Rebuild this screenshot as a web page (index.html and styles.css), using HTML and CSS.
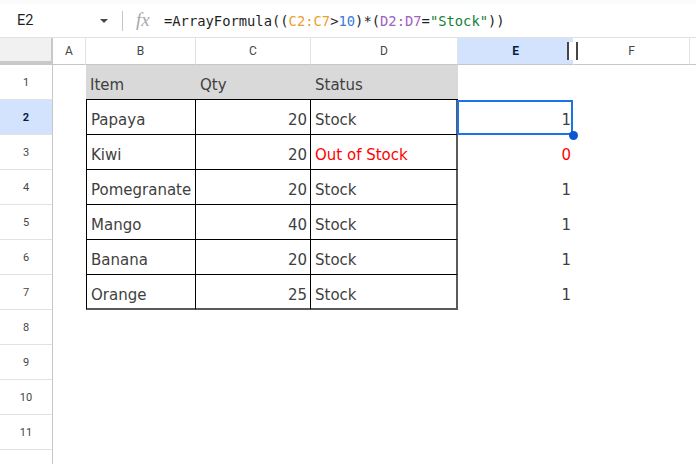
FILE: index.html
```html
<!DOCTYPE html>
<html>
<head>
<meta charset="utf-8">
<link rel="stylesheet" href="styles.css">
</head>
<body>
<div class="app">
  <div class="topstrip"></div>
  <div class="fbar">
    <div class="namebox">
      <span class="ref">E2</span>
      <svg class="caret" width="8" height="4" viewBox="0 0 8 4"><path d="M0 0H8L4 4Z" fill="#444746"/></svg>
    </div>
    <div class="fsep"></div>
    <span class="fx">fx</span>
    <div class="formula">=ArrayFormula((<span class="f-or">C2:C7</span>&gt;<span class="f-num">10</span>)*(<span class="f-pu">D2:D7</span>=<span class="f-str">"Stock"</span>))</div>
  </div>
  <div class="sheet">
    <div class="corner"></div>
    <div class="ch">A</div>
    <div class="ch">B</div>
    <div class="ch">C</div>
    <div class="ch">D</div>
    <div class="ch ch-sel">E<span class="grip"></span></div>
    <div class="ch">F</div>
    <div class="ch ch-last"></div>

    <div class="rh">1</div><div class="c"></div>
    <div class="c hd">Item</div><div class="c hd">Qty</div><div class="c hd">Status</div>
    <div class="c"></div><div class="c"></div><div class="c"></div>

    <div class="rh rh-sel">2</div><div class="c"></div>
    <div class="c t tl">Papaya</div><div class="c t num">20</div><div class="c t tr">Stock</div>
    <div class="c num sel">1</div><div class="c"></div><div class="c"></div>

    <div class="rh">3</div><div class="c"></div>
    <div class="c t tl">Kiwi</div><div class="c t num">20</div><div class="c t tr red">Out of Stock</div>
    <div class="c num red">0</div><div class="c"></div><div class="c"></div>

    <div class="rh">4</div><div class="c"></div>
    <div class="c t tl">Pomegranate</div><div class="c t num">20</div><div class="c t tr">Stock</div>
    <div class="c num">1</div><div class="c"></div><div class="c"></div>

    <div class="rh">5</div><div class="c"></div>
    <div class="c t tl">Mango</div><div class="c t num">40</div><div class="c t tr">Stock</div>
    <div class="c num">1</div><div class="c"></div><div class="c"></div>

    <div class="rh">6</div><div class="c"></div>
    <div class="c t tl">Banana</div><div class="c t num">20</div><div class="c t tr">Stock</div>
    <div class="c num">1</div><div class="c"></div><div class="c"></div>

    <div class="rh">7</div><div class="c"></div>
    <div class="c t tl tb">Orange</div><div class="c t num tb">25</div><div class="c t tr tb">Stock</div>
    <div class="c num">1</div><div class="c"></div><div class="c"></div>

    <div class="rh">8</div><div class="c"></div><div class="c"></div><div class="c"></div><div class="c"></div><div class="c"></div><div class="c"></div><div class="c"></div>
    <div class="rh">9</div><div class="c"></div><div class="c"></div><div class="c"></div><div class="c"></div><div class="c"></div><div class="c"></div><div class="c"></div>
    <div class="rh">10</div><div class="c"></div><div class="c"></div><div class="c"></div><div class="c"></div><div class="c"></div><div class="c"></div><div class="c"></div>
    <div class="rh">11</div><div class="c"></div><div class="c"></div><div class="c"></div><div class="c"></div><div class="c"></div><div class="c"></div><div class="c"></div>
    <div class="rh"></div><div class="c"></div><div class="c"></div><div class="c"></div><div class="c"></div><div class="c"></div><div class="c"></div><div class="c"></div>
  </div>
</div>
</body>
</html>
```

FILE: styles.css
```css
* { box-sizing: border-box; }
html, body { margin: 0; padding: 0; background: #fff; }
body { width: 696px; height: 464px; overflow: hidden; font-family: Roboto, "Liberation Sans", sans-serif; }

.app { display: flex; flex-direction: column; }

.topstrip { height: 4px; background: #f9fbfd; }

.fbar {
  height: 34px;
  display: flex;
  align-items: center;
  border-bottom: 1px solid #e1e3e1;
  background: #fff;
}
.namebox {
  width: 122px;
  display: flex;
  align-items: center;
  padding-left: 17px;
  padding-right: 14px;
  justify-content: space-between;
}
.ref { font-size: 14.5px; color: #1f1f1f; }
.caret { display: block; margin-top: 1px; }
.fsep { width: 1px; height: 20px; background: #c4c7c5; }
.fx {
  font-family: "Liberation Serif", serif;
  font-style: italic;
  font-size: 19px;
  color: #a5a8ab;
  margin-left: 13px;
  width: 28px;
  margin-top: -2px;
}
.formula {
  font-family: "DejaVu Sans Mono", "Liberation Mono", monospace;
  font-size: 13.8px;
  color: #1f1f1f;
  white-space: nowrap;
  margin-top: 1px;
}
.f-or { color: #f09d2b; }
.f-num { color: #3b7be0; }
.f-pu { color: #a15fc2; }
.f-str { color: #188038; }

.sheet {
  display: grid;
  grid-template-columns: 53px 33px 110px 115px 147px 116px 116px 1fr;
  grid-template-rows: 27px repeat(12, 35px);
}

.corner {
  background: #f1f1f1;
  border-right: 2px solid #c8c8c8;
  border-bottom: 4px solid #c8c8c8;
}
.ch {
  position: relative;
  display: flex;
  align-items: center;
  justify-content: center;
  font-size: 12px;
  color: #444746;
  border-right: 1px solid #e1e3e1;
  border-bottom: 1px solid #c4c7c5;
}
.ch-sel { background: #d3e3fd; color: #041e49; font-weight: bold; border-right-color: #fff; }
.grip {
  position: absolute;
  right: -5px;
  top: 4px;
  width: 11px;
  height: 18px;
  border-left: 2px solid #444746;
  border-right: 2px solid #444746;
  background: #fff;
  z-index: 2;
}
.ch-last { border-right: none; }

.rh {
  display: flex;
  align-items: center;
  justify-content: center;
  font-size: 11px;
  color: #444746;
  border-right: 1px solid #c4c7c5;
  border-bottom: 1px solid #e1e3e1;
}
.rh-sel { background: #d3e3fd; color: #041e49; font-weight: bold; }

.c {
  position: relative;
  display: flex;
  align-items: flex-end;
  padding: 0 4px 6px 4px;
  font-family: "DejaVu Sans", Verdana, sans-serif;
  font-size: 15px;
  color: #3f3f3f;
  white-space: nowrap;
}
.hd { background: #d9d9d9; border-bottom: 1px solid #000; padding-bottom: 5px; }
.t { border-right: 1px solid #000; border-bottom: 1px solid #000; padding-bottom: 5px; }
.tl { border-left: 1px solid #000; }
.tr { border-right: 2px solid #5a5a5a; }
.tb { border-bottom: 2px solid #5a5a5a; padding-bottom: 4px; }
.num { justify-content: flex-end; padding-right: 3px; }
.red { color: #ff0000; }

.sel::after {
  content: "";
  position: absolute;
  top: 0;
  left: -1px;
  right: 1px;
  bottom: 0;
  border: 2px solid #1a73e8;
}
.sel::before {
  content: "";
  position: absolute;
  right: -4px;
  bottom: -5px;
  width: 9px;
  height: 9px;
  border-radius: 50%;
  background: #0b57d0;
  z-index: 2;
}
```
